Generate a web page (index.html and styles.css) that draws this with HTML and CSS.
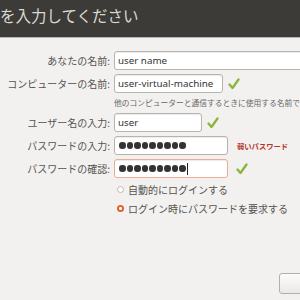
FILE: index.html
```html
<!DOCTYPE html>
<html lang="ja">
<head>
<meta charset="utf-8">
<link rel="stylesheet" href="styles.css">
</head>
<body>
<header class="titlebar"><h1 class="title">を入力してください</h1></header>
<main class="form">
  <label class="lbl">あなたの名前:</label>
  <div class="field"><div class="input w-full">user name</div></div>

  <label class="lbl">コンピューターの名前:</label>
  <div class="field"><div class="input w-comp">user-virtual-machine</div>
    <svg class="check" viewBox="0 0 12 12"><path d="M1.5 6.5 L4.5 10 L10.5 1.5" /></svg></div>

  <span></span>
  <div class="hint">他のコンピューターと通信するときに使用する名前です。</div>

  <label class="lbl">ユーザー名の入力:</label>
  <div class="field"><div class="input w-user">user</div>
    <svg class="check" viewBox="0 0 12 12"><path d="M1.5 6.5 L4.5 10 L10.5 1.5" /></svg></div>

  <label class="lbl">パスワードの入力:</label>
  <div class="field"><div class="input w-pass"><span class="dots"><i></i><i></i><i></i><i></i><i></i><i></i><i></i><i></i><i></i></span></div>
    <span class="weak">弱いパスワード</span></div>

  <label class="lbl">パスワードの確認:</label>
  <div class="field"><div class="input w-pass focus"><span class="dots"><i></i><i></i><i></i><i></i><i></i><i></i><i></i><i></i><i></i></span><span class="caret"></span></div>
    <svg class="check check-far" viewBox="0 0 12 12"><path d="M1.5 6.5 L4.5 10 L10.5 1.5" /></svg></div>

  <span></span>
  <div class="radio"><span class="dot"></span>自動的にログインする</div>
  <span></span>
  <div class="radio"><span class="dot on"></span>ログイン時にパスワードを要求する</div>
</main>
<div class="footer"><div class="btn"></div></div>
</body>
</html>
```
FILE: styles.css
```css
html, body { margin: 0; padding: 0; }
body {
  width: 300px; height: 300px; overflow: hidden;
  background: #f2f1f0;
  font-family: "Noto Sans", "Noto Sans CJK JP", sans-serif;
  position: relative;
}
.titlebar {
  height: 37px;
  background: #3c3b37;
  border-bottom: 1px solid #b8b5b0;
  overflow: hidden;
}
.title {
  margin: 0;
  padding: 2px 0 0 0;
  font-family: "Noto Sans CJK JP", sans-serif;
  font-weight: 400;
  font-size: 15.5px;
  line-height: 26px;
  color: #dcd8cf;
  white-space: nowrap;
}
.form {
  display: grid;
  grid-template-columns: 110px 1fr;
  column-gap: 4px;
  row-gap: 4px;
  padding-top: 13px;
}
.lbl {
  font-family: "Noto Sans CJK JP", sans-serif;
  font-size: 10px;
  color: #555350;
  text-align: right;
  line-height: 19px;
  white-space: nowrap;
}
.field {
  display: flex;
  align-items: center;
  height: 19px;
  white-space: nowrap;
}
.input {
  box-sizing: border-box;
  height: 19px;
  background: #fff;
  border: 1px solid #b7b4ae;
  border-radius: 3px;
  box-shadow: inset 0 1px 1px rgba(0,0,0,0.08);
  padding: 0 4px 0 3px;
  font-size: 9.8px;
  line-height: 17px;
  color: #333;
  display: flex;
  align-items: center;
  flex-shrink: 0;
}
.input.focus { border-color: #ecab93; }
.w-full { width: 200px; }
.w-comp { width: 109px; }
.w-user { width: 88px; }
.w-pass { width: 114px; }
.dots { display: flex; gap: 1px; margin-left: 1px; }
.dots i { width: 6.5px; height: 6.5px; border-radius: 50%; background: #333; display: block; }
.caret { width: 1px; height: 12px; background: #222; margin-left: 1px; }
.check { width: 12px; height: 12px; margin-left: 5px; }
.check path { fill: none; stroke: #8ab53d; stroke-width: 2.3; stroke-linecap: round; stroke-linejoin: round; }
.check-far { margin-left: 8px; }
.weak {
  margin-left: 9px;
  font-family: "Noto Sans CJK JP", sans-serif;
  font-size: 7.3px;
  font-weight: 700;
  color: #b8342b;
}
.hint {
  font-family: "Noto Sans CJK JP", sans-serif;
  font-size: 7.75px;
  color: #6a6864;
  line-height: 12px;
  white-space: nowrap;
}
.radio {
  display: flex;
  align-items: center;
  height: 15px;
  padding-left: 3px;
  font-family: "Noto Sans CJK JP", sans-serif;
  font-size: 10px;
  color: #555350;
  white-space: nowrap;
}
.dot {
  box-sizing: border-box;
  width: 7px; height: 7px;
  border-radius: 50%;
  border: 1px solid #bdbab5;
  background: #fff;
  margin-right: 4px;
}
.dot.on {
  border: none;
  background: radial-gradient(circle, #fff 0 1.3px, #e2612a 1.6px);
}
.footer {
  position: absolute;
  left: 279px; top: 273px;
}
.btn {
  width: 30px; height: 21px;
  box-sizing: border-box;
  border: 1px solid #b3b0ab;
  border-radius: 3px;
  background: linear-gradient(#fbfbfa, #ebe9e6);
}
```
